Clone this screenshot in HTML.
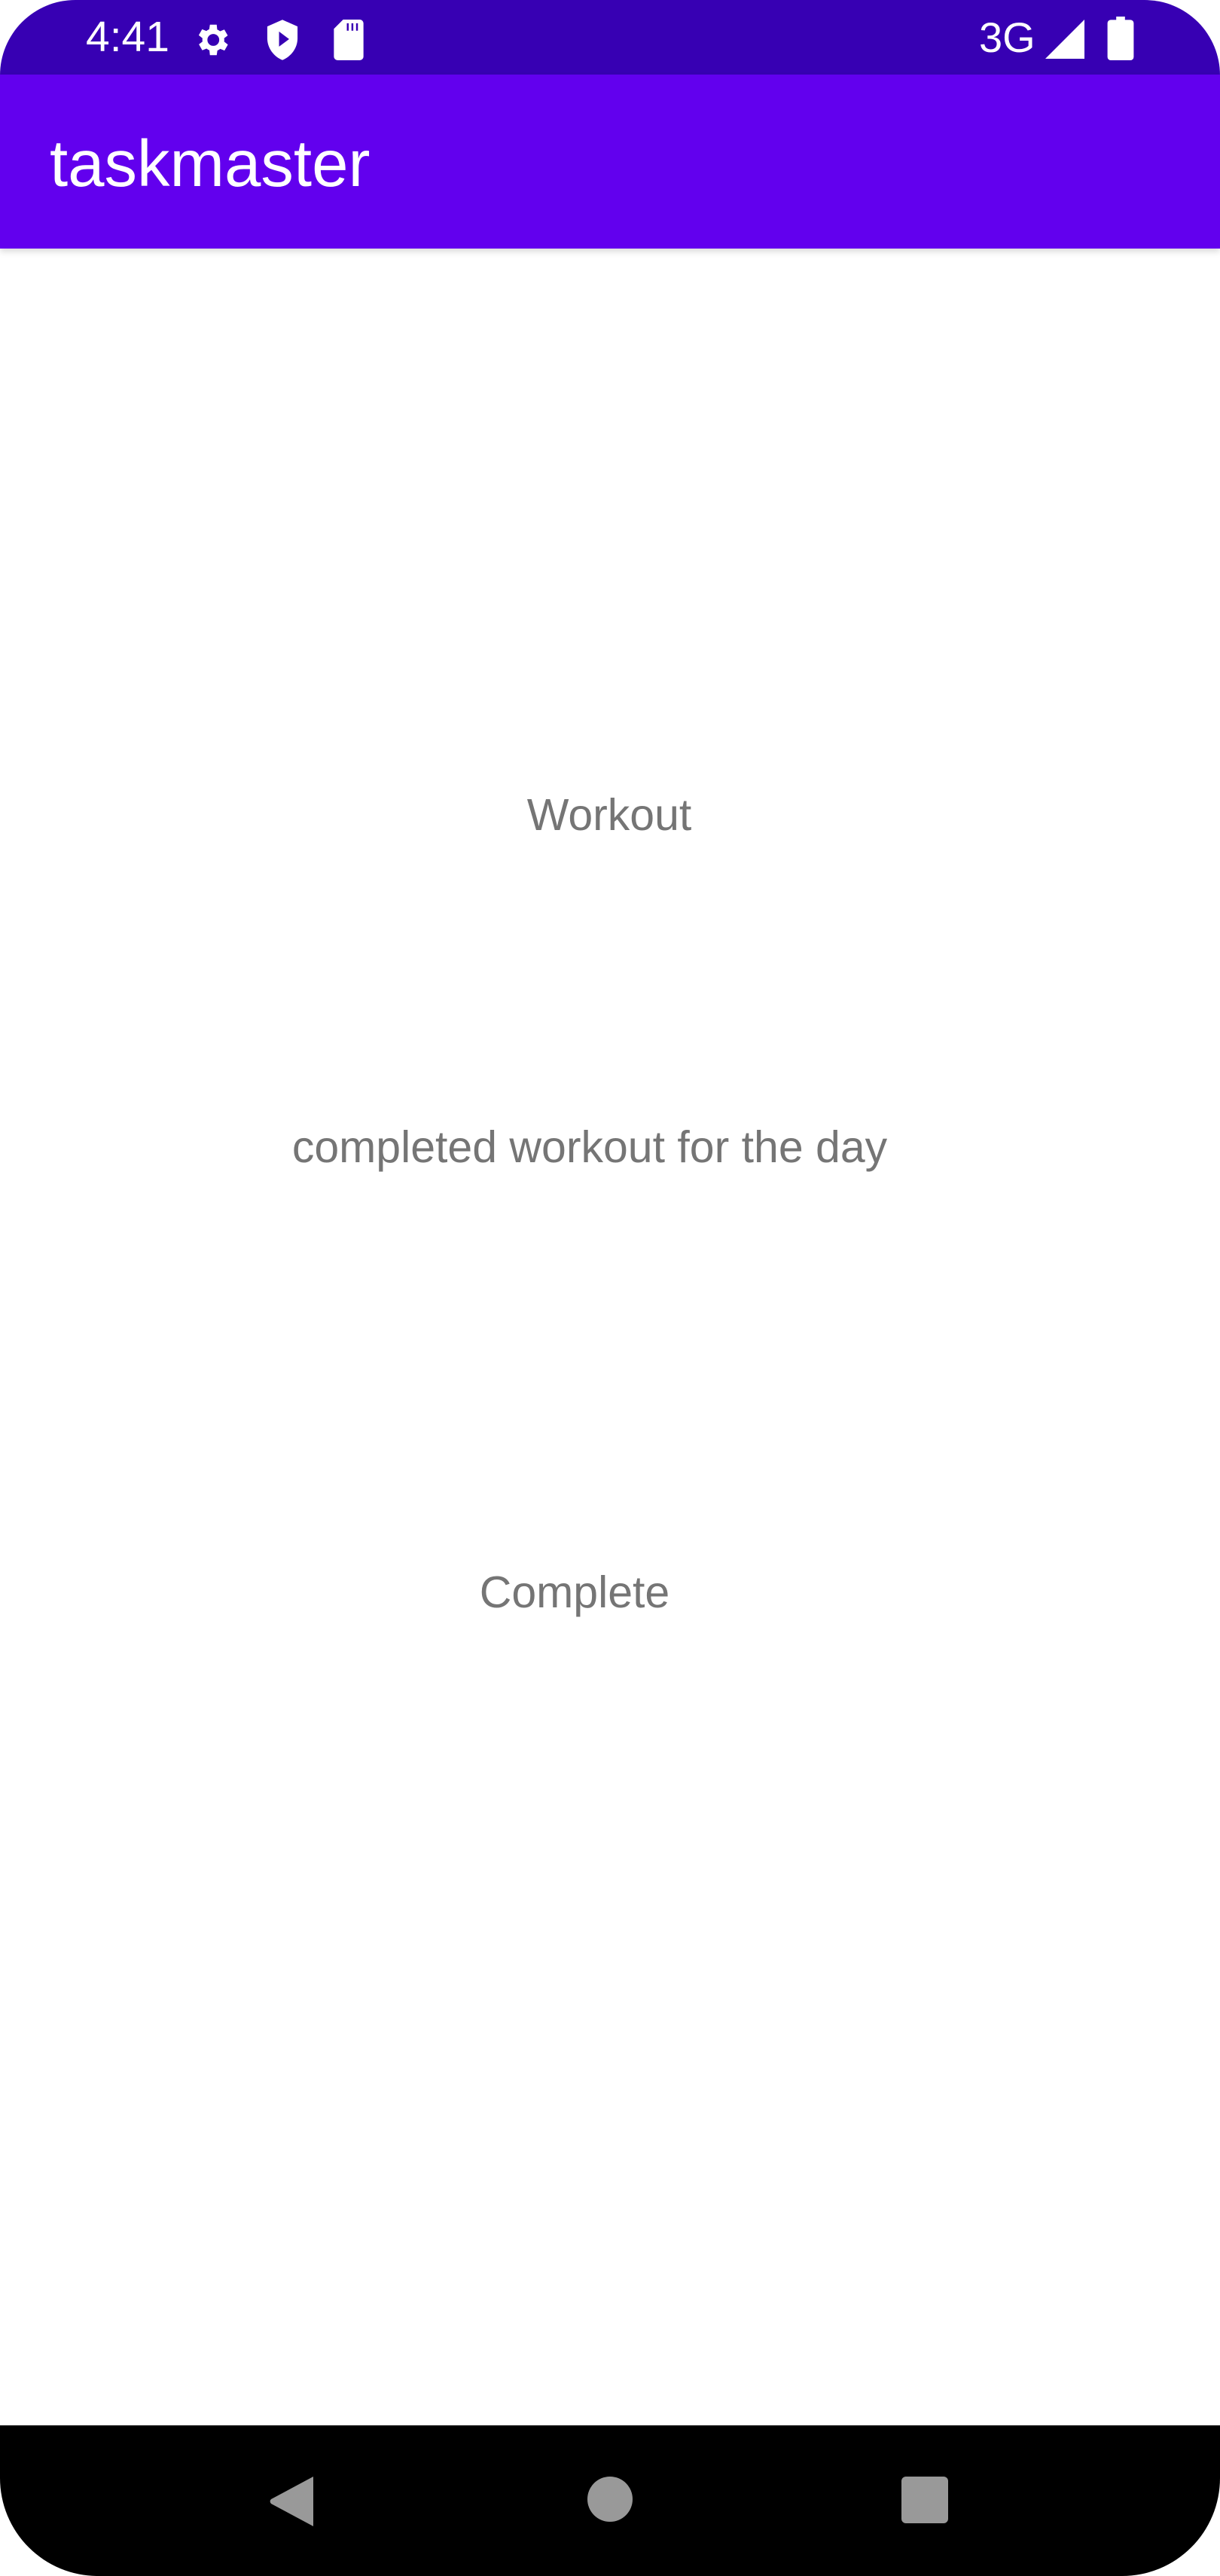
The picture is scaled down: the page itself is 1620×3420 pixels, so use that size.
<!DOCTYPE html>
<html><head><style>
*{margin:0;padding:0;box-sizing:border-box}
body{width:1620px;height:3420px;background:#fff;position:relative;overflow:hidden;font-family:"Liberation Sans",Roboto,sans-serif}
.sb{position:absolute;left:0;top:0;width:1620px;height:100px;background:#3700b3;border-radius:100px 100px 0 0}
.ab{position:absolute;left:0;top:99px;width:1620px;height:231px;background:#6200ee;box-shadow:0 4px 8px rgba(0,0,0,.15)}
.t{position:absolute;color:#fff}
.tx{position:absolute;color:#757575;font-size:59px;white-space:nowrap;transform:translate(-50%,-50%)}
.nav{position:absolute;left:0;top:3220px;width:1620px;height:200px;background:#000;border-radius:0 0 130px 130px}
</style></head><body>
<div class="sb"></div>
<div class="t" style="left:114px;top:16px;font-size:57px;">4:41</div>
<svg class="t" style="left:254px;top:26px" width="54" height="54" viewBox="0 0 24 24"><path fill="#fff" d="M19.4 13a7.5 7.5 0 0 0 0-2l2.1-1.6-2-3.5-2.5 1a7 7 0 0 0-1.7-1L15 3h-4l-.4 2.7a7 7 0 0 0-1.7 1l-2.5-1-2 3.5L6.6 11a7.5 7.5 0 0 0 0 2l-2.1 1.6 2 3.5 2.5-1a7 7 0 0 0 1.7 1L11 21h4l.4-2.7a7 7 0 0 0 1.7-1l2.5 1 2-3.5zM13 15.5a3.5 3.5 0 1 1 0-7 3.5 3.5 0 0 1 0 7z"/></svg>
<svg class="t" style="left:348px;top:24px" width="54" height="58" viewBox="0 0 24 26"><path fill="#fff" d="M12 1 3 5v7c0 6 4 11 9 13 5-2 9-7 9-13V5z"/><path fill="#3700b3" d="M10 8v9l6-4.5z"/></svg>
<svg class="t" style="left:442px;top:26px" width="42" height="54" viewBox="0 0 16 22"><path fill="#fff" d="M5 0h9a2 2 0 0 1 2 2v18a2 2 0 0 1-2 2H2a2 2 0 0 1-2-2V5z"/><path fill="#3700b3" d="M7 2h1v4H7zM9.5 2h1v4h-1zM12 2h1v4h-1z"/></svg>
<div class="t" style="left:1300px;top:17px;font-size:56px;">3G</div>
<svg class="t" style="left:1388px;top:26px" width="52" height="52" viewBox="0 0 20 20"><path fill="#fff" d="M20 0v20H0z"/></svg>
<svg class="t" style="left:1470px;top:22px" width="36" height="58" viewBox="0 0 12 20"><path fill="#fff" d="M4 0h4v1.5h2.5a1.5 1.5 0 0 1 1.5 1.5v15.5a1.5 1.5 0 0 1-1.5 1.5h-9A1.5 1.5 0 0 1 0 18.5V3a1.5 1.5 0 0 1 1.5-1.5H4z"/></svg>
<div class="ab"></div>
<div class="t" style="left:66px;top:168px;font-size:87px;">taskmaster</div>
<div class="tx" style="left:809px;top:1082px">Workout</div>
<div class="tx" style="left:783px;top:1523px">completed workout for the day</div>
<div class="tx" style="left:763px;top:2114px">Complete</div>
<div class="nav"></div>
<svg style="position:absolute;left:356px;top:3286px" width="62" height="70" viewBox="0 0 62 70"><path fill="#999" d="M60 2v66L4 38a4 4 0 0 1 0-6z"/></svg>
<div style="position:absolute;left:780px;top:3288px;width:60px;height:60px;border-radius:50%;background:#999"></div>
<div style="position:absolute;left:1197px;top:3288px;width:62px;height:62px;border-radius:6px;background:#999"></div>
</body></html>
